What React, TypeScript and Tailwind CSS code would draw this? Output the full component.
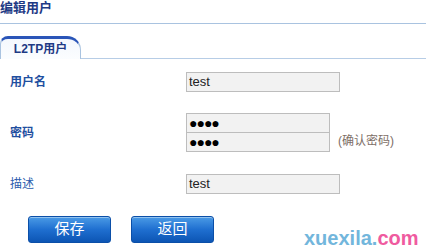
const cjk = { fontFamily: '"Liberation Sans", "Noto Sans CJK SC", sans-serif' };

function Field({ value, w, dots }: { value: string; w: string; dots?: boolean }) {
  return (
    <div
      className={`${w} h-[20px] border border-[#bdbdbd] bg-[#f2f2f2] pl-[2px] flex items-center text-[13px] text-[#222]`}
    >
      {dots ? <span className="text-[14px] font-bold tracking-[-1px] text-black leading-none">●●●●</span> : value}
    </div>
  );
}

function Btn({ label }: { label: string }) {
  return (
    <button className="w-[83px] h-[27px] rounded-[3px] border border-[#0b4fa8] bg-gradient-to-b from-[#4a9be6] via-[#1f6fd0] to-[#0c55b4] text-white text-[15px] shadow-[inset_0_1px_0_rgba(255,255,255,0.4)]">
      {label}
    </button>
  );
}

export default function App() {
  return (
    <div className="relative w-[426px] h-[252px] bg-white overflow-hidden" style={cjk}>
      <div className="h-[24px] border-b border-[#a9c3e0]">
        <div className="text-[13px] font-bold text-[#1e3a85] leading-[15px]">编辑用户</div>
      </div>

      <div className="mt-[12px] h-[23px] border-b border-[#b7cde6] flex items-end">
        <div className="w-[81px] h-[23px] -mb-px rounded-tr-[14px] rounded-tl-[8px] border-t-[3px] border-t-[#2a55b8] border-r border-r-[#a9c3e0] border-l border-l-[#a9c3e0] bg-gradient-to-b from-[#f4f8fd] to-[#fbfdff] flex items-center justify-center">
          <span className="text-[12px] font-bold text-[#1e3a85]">L2TP用户</span>
        </div>
      </div>

      <div className="pl-[10px]">
        <div className="mt-[13px] flex items-center">
          <div className="w-[176px] text-[12px] font-bold text-[#1f4fa0]">用户名</div>
          <Field value="test" w="w-[154px]" />
        </div>

        <div className="mt-[21px] flex items-center">
          <div className="w-[176px] text-[12px] font-bold text-[#1f4fa0]">密码</div>
          <div className="flex flex-col">
            <Field value="" w="w-[144px]" dots />
            <Field value="" w="w-[144px] -mt-px" dots />
          </div>
          <div className="self-end mb-[2px] ml-[8px] text-[12px] text-[#7d6e66]">(确认密码)</div>
        </div>

        <div className="mt-[22px] flex items-center">
          <div className="w-[176px] text-[12px] text-[#2b5cad]">描述</div>
          <Field value="test" w="w-[154px]" />
        </div>

        <div className="mt-[22px] pl-[18px] flex gap-[20px]">
          <Btn label="保存" />
          <Btn label="返回" />
        </div>
      </div>

      <div className="absolute left-[304px] top-[226px] text-[20px] font-bold leading-[24px]">
        <span className="text-[#72b6dc]">xuexila.</span>
        <span className="text-[#ef5b9f]">com</span>
      </div>
    </div>
  );
}
